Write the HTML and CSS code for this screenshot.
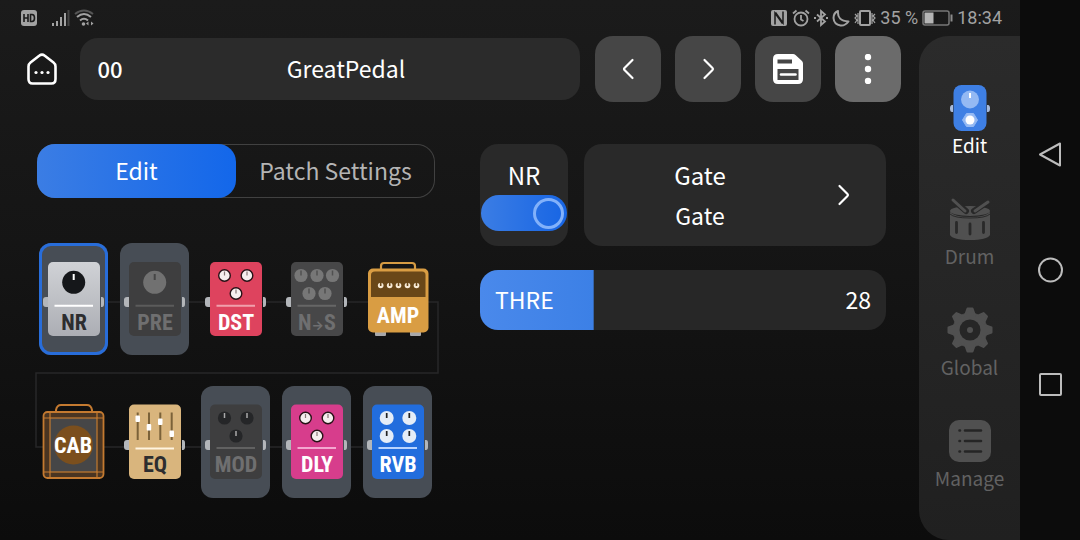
FILE: index.html
```html
<!DOCTYPE html>
<html lang="en">
<head>
<meta charset="utf-8">
<title>GreatPedal</title>
<link rel="stylesheet" href="styles.css">
</head>
<body class="device">
<div class="screen">
  <header class="status">
    <div class="status-group status-left">
      <svg width="18" height="18" viewBox="0 0 18 18"><rect x="1" y="1" width="16" height="16" rx="3" fill="#a2a2a2"/><path d="M4 5v8M8 5v8M4 9h4M10.500 5.500v7h1.500q2.500 0 2.500-3.500t-2.500-3.500z" fill="none" stroke="#1b1b1b" stroke-width="1.600"/></svg>
      <svg width="20" height="18" viewBox="0 0 20 18"><g stroke-width="2" fill="none" stroke="#a2a2a2"><path d="M3 14v3M7 12v5M11 8v9M15 4v13"/><path d="M18.500 1v16" stroke="#444"/></g></svg>
      <svg width="20" height="18" viewBox="0 0 20 18"><g fill="none" stroke-width="2" stroke="#a2a2a2"><path d="M1 5q9-7 18 0" stroke="#555"/><path d="M3 8q7-6 14 0"/><path d="M6 11.500q4-3.500 8 0"/></g><circle cx="9.500" cy="15" r="1.800" fill="#a2a2a2"/><path d="M12 14.500l2.500-2v4zM19.500 14.500l-2.500-2v4z" fill="#a2a2a2"/></svg>
    </div>
    <div class="status-group status-right">
      <svg width="18" height="18" viewBox="0 0 18 18"><path d="M3 1h12q2 0 2 2v12q0 2-2 2H3q-2 0-2-2V3q0-2 2-2z" fill="#a2a2a2"/><path d="M5 15.500V4l7.500 10.500M13 2.500V14L5.500 3.500" stroke="#1b1b1b" stroke-width="1.500" fill="none"/></svg>
      <svg width="18" height="18" viewBox="0 0 18 18" fill="none" stroke="#a2a2a2" stroke-width="1.800"><circle cx="9" cy="10" r="6.500"/><path d="M9 6v4.500l2.500 1.500M1 4.500l3.500-3M17 4.500l-3.500-3"/></svg>
      <svg width="14" height="18" viewBox="0 0 14 18" fill="none" stroke="#a2a2a2" stroke-width="1.800"><path d="M3 5.500l8 7-4 3.500V2l4 3.500-8 7"/><path d="M0 9h2M12 9h2"/></svg>
      <svg width="18" height="18" viewBox="0 0 18 18" fill="none" stroke="#a2a2a2" stroke-width="2" stroke-linejoin="round"><path d="M6 2Q5 12 16.500 12.500 13 17 8.500 16.500 2 15.500 1.500 9 1.500 4 6 2z"/></svg>
      <svg width="22" height="18" viewBox="0 0 22 18" fill="none" stroke="#a2a2a2"><rect x="6" y="2" width="10" height="14" rx="1" stroke-width="2"/><path d="M1 5l2 2-2 2 2 2-2 3M4 4v11M18 4v11M21 5l-2 2 2 2-2 2 2 3" stroke-width="1.200"/></svg>
      <span class="status-text">35 %</span>
      <svg width="31" height="18" viewBox="0 0 31 18"><rect x="1" y="2" width="26" height="14" rx="2" fill="none" stroke="#777" stroke-width="1.500"/><rect x="2.500" y="3.500" width="9" height="11" fill="#b5b5b5"/><path d="M29.500 5.500v7" stroke="#8a8a8a" stroke-width="2"/></svg>
      <time class="status-text">18:34</time>
    </div>
  </header>

  <main class="editor">
    <div class="topbar">
      <button class="home" aria-label="Home">
        <svg width="30" height="32" viewBox="0 0 30 32"><path d="M12.500 2.600Q15 .5 17.500 2.600L26.500 9.500Q28.500 11 28.500 13.500V26Q28.500 30.500 24.500 30.500H5.500Q1.500 30.500 1.500 26V13.500Q1.500 11 3.500 9.500z" fill="none" stroke="#fff" stroke-width="2.600"/><g fill="#fff"><circle cx="9" cy="19.500" r="1.600"/><circle cx="15" cy="19.500" r="1.600"/><circle cx="21" cy="19.500" r="1.600"/></g></svg>
      </button>
      <button class="patch"><span class="patch-number">00</span><span class="patch-name">GreatPedal</span></button>
      <div class="tools">
        <button class="tool" aria-label="Previous patch"><svg width="30" height="30" viewBox="0 0 30 30"><path d="M19.500 6l-8 8q-1 1 0 2l8 8" fill="none" stroke="#fff" stroke-width="2.200" stroke-linecap="round"/></svg></button>
        <button class="tool" aria-label="Next patch"><svg width="30" height="30" viewBox="0 0 30 30"><path d="M11.500 6l8 8q1 1 0 2l-8 8" fill="none" stroke="#fff" stroke-width="2.200" stroke-linecap="round"/></svg></button>
        <button class="tool" aria-label="Save"><svg width="30" height="30" viewBox="0 0 30 30"><path d="M5 0h15q1.500 0 2.500 1l6.500 6q1 1 1 2.500V25q0 5-5 5H5q-5 0-5-5V5q0-5 5-5z" fill="#fff"/><path d="M4.500 5.500h14.500v4H4.500zM4.500 15h21v11h-21z" fill="#464646"/><path d="M8 20.500h14.500" stroke="#fff" stroke-width="2.600" stroke-linecap="round"/></svg></button>
        <button class="tool tool-active" aria-label="More"><svg width="30" height="30" viewBox="0 0 30 30" fill="#fff"><circle cx="15" cy="3" r="3.200"/><circle cx="15" cy="15" r="3.200"/><circle cx="15" cy="27" r="3.200"/></svg></button>
      </div>
    </div>

    <div class="columns">
      <section class="left">
        <div class="tabs" role="tablist">
          <button class="tab tab-on" role="tab" aria-selected="true">Edit</button>
          <button class="tab" role="tab" aria-selected="false">Patch Settings</button>
        </div>

        <div class="chain">
          <svg class="wire" viewBox="0 0 398 255" preserveAspectRatio="none"><path d="M37 59H401V130H-1V204H390" fill="none" stroke="#272728" stroke-width="1.500"/></svg>
          <div class="effects">
            <button class="effect lit selected"><svg class="pedal" viewBox="0 0 69 112">
              <defs>
                <linearGradient id="silver" x2="0" y2="1"><stop stop-color="#d0d2d6"/><stop offset="1" stop-color="#acaeb4"/></linearGradient>
                <g id="jacks" fill="#b3b6ba"><path d="M9 54H7q-3 0-3 3v4q0 3 3 3h2zM62 54h1q2 0 2 3v4q0 3-2 3h-1z"/></g>
                <g id="dial"><circle r="5.800" fill="#f6eeee" stroke="#271116" stroke-width="1.400"/><path d="M0-4v4" stroke="#877" stroke-width="1.200"/></g>
                <g id="dial-off"><circle r="6.600" fill="#777"/><path d="M0-5v5" stroke="#505050" stroke-width="1.500"/></g>
                <g id="dial-dark"><circle r="6.600" fill="#252628"/><path d="M0-5v5" stroke="#aaa" stroke-width="1.500"/></g>
                <g id="dial-white"><circle r="7" fill="#e5edf7"/><path d="M0-5v5" stroke="#222" stroke-width="1.700"/></g>
              </defs>
              <use href="#jacks"/><rect x="9" y="19" width="52" height="74" rx="5" fill="url(#silver)"/><circle cx="34.700" cy="39.300" r="11.500" fill="#15171a"/><path d="M34.700 31v6" stroke="#fff" stroke-width="2"/><path d="M15.500 62.700h38.500" stroke="#fff" stroke-width="2"/><text class="name name-dark" x="35" y="87">NR</text></svg></button>
            <button class="effect lit"><svg class="pedal" viewBox="0 0 69 112"><use href="#jacks"/><rect x="9" y="19" width="52" height="74" rx="5" fill="#3e3e3f"/><circle cx="34.700" cy="39.300" r="11.500" fill="#717171"/><path d="M34.700 31v6" stroke="#464646" stroke-width="2"/><path d="M15.500 62.700h38.500" stroke="#5b5b5b" stroke-width="2"/><text class="name name-off" x="35" y="87">PRE</text></svg></button>
            <button class="effect"><svg class="pedal" viewBox="0 0 69 112"><use href="#jacks"/><rect x="9" y="19" width="52" height="74" rx="5" fill="#de435e"/><use href="#dial" x="23.500" y="32.500"/><use href="#dial" x="46" y="32.500"/><use href="#dial" x="35" y="50.500"/><path d="M15.500 62.700h38.500" stroke="#f0a0ad" stroke-width="2"/><text class="name" x="35" y="87">DST</text></svg></button>
            <button class="effect"><svg class="pedal" viewBox="0 0 69 112"><use href="#jacks"/><rect x="9" y="19" width="52" height="74" rx="5" fill="#474748"/><use href="#dial-off" x="19" y="32.500"/><use href="#dial-off" x="35" y="32.500"/><use href="#dial-off" x="50.500" y="32.500"/><use href="#dial-off" x="27" y="50.500"/><use href="#dial-off" x="43" y="50.500"/><path d="M15.500 62.700h38.500" stroke="#666" stroke-width="2"/><text class="name name-off" x="35" y="87">N<tspan class="arrow">→</tspan>S</text></svg></button>
            <button class="effect"><svg class="pedal" viewBox="0 0 69 112"><path d="M18 27v-4q0-3 3-3h28q3 0 3 3v4" fill="none" stroke="#d69b43" stroke-width="2.200"/><path d="M12 88h11v4q0 1-1 1h-9q-1 0-1-1zM47 88h11v4q0 1-1 1h-9q-1 0-1-1z" fill="#a8a8aa"/><rect x="5" y="25.500" width="60.500" height="64" rx="5" fill="#d99d43"/><path d="M12 28.500h47q3.500 0 3.500 3.500v22H8V32q0-3.500 4-3.500z" fill="#694718"/><g fill="#f7ead6"><circle cx="17.700" cy="42.500" r="2.800"/><circle cx="26.700" cy="42.500" r="2.800"/><circle cx="35.500" cy="42.500" r="2.800"/><circle cx="44.500" cy="42.500" r="2.800"/><circle cx="53.500" cy="42.500" r="2.800"/></g><path d="M17.700 39v4M26.700 39v4M35.500 39v4M44.500 39v4M53.500 39v4" stroke="#694718" stroke-width="1.600"/><text class="name" x="35" y="80">AMP</text></svg></button>

            <button class="effect"><svg class="pedal" viewBox="0 0 69 112"><g fill="none" stroke="#c47a30"><path d="M17 26v-2q1-5 5-5h26q4 0 5 5v2" stroke-width="2"/><rect x="4.500" y="26" width="60" height="66" rx="4" fill="#4a3522" stroke-width="1.800"/><rect x="11" y="32" width="47" height="54" fill="#464647" stroke-width="1.200"/><path d="M4.500 32h6.500v-6M64.500 32h-6.500v-6M4.500 86h6.500v6M64.500 86h-6.500v6" stroke-width="1.200"/></g><circle cx="34.500" cy="59" r="19.500" fill="#7b4f1d"/><text class="name" x="34" y="67">CAB</text></svg></button>
            <button class="effect"><svg class="pedal" viewBox="0 0 69 112"><use href="#jacks"/><rect x="9" y="18.500" width="52" height="74.500" rx="5" fill="#d9b57d"/><path d="M17.700 26.500v27.500M29 26.500v27.500M40.300 26.500v27.500M51.700 26.500v27.500" stroke="#7b6239" stroke-width="2"/><g fill="#fff"><rect x="15.500" y="29.500" width="4.500" height="6.500" rx="1"/><rect x="26.700" y="38" width="4.500" height="6.500" rx="1"/><rect x="38" y="32.500" width="4.500" height="6.500" rx="1"/><rect x="49.500" y="44.500" width="4.500" height="6.500" rx="1"/></g><path d="M15.500 62.500h38.500" stroke="#fff4df" stroke-width="2"/><text class="name name-dark" x="35" y="86">EQ</text></svg></button>
            <button class="effect lit"><svg class="pedal" viewBox="0 0 69 112"><use href="#jacks"/><rect x="9" y="18.500" width="52" height="74.500" rx="5" fill="#3e3e3f"/><use href="#dial-dark" x="23.500" y="32"/><use href="#dial-dark" x="46" y="32"/><use href="#dial-dark" x="35" y="50"/><path d="M15.500 62h38.500" stroke="#616161" stroke-width="2"/><text class="name name-off" x="35" y="86">MOD</text></svg></button>
            <button class="effect lit"><svg class="pedal" viewBox="0 0 69 112"><use href="#jacks"/><rect x="9" y="18.500" width="52" height="74.500" rx="5" fill="#d73d8c"/><use href="#dial" x="23.500" y="32"/><use href="#dial" x="46" y="32"/><use href="#dial" x="35" y="50"/><path d="M15.500 62h38.500" stroke="#f4a6d0" stroke-width="2"/><text class="name" x="35" y="86">DLY</text></svg></button>
            <button class="effect lit"><svg class="pedal" viewBox="0 0 69 112"><use href="#jacks"/><rect x="9" y="18.500" width="52" height="74.500" rx="5" fill="#226ddd"/><use href="#dial-white" x="23.700" y="32"/><use href="#dial-white" x="46.300" y="32"/><use href="#dial-white" x="23.700" y="50"/><use href="#dial-white" x="46.300" y="50"/><path d="M15.500 62h38.500" stroke="#b9d4ff" stroke-width="2"/><text class="name" x="35" y="86">RVB</text></svg></button>
          </div>
        </div>
      </section>

      <section class="right">
        <div class="module">
          <div class="card power">
            <label class="power-label" for="power">NR</label>
            <input class="switch" id="power" type="checkbox" role="switch" checked>
          </div>
          <button class="card model">
            <span class="model-names"><span class="model-type">Gate</span><span class="model-name">Gate</span></span>
            <svg width="30" height="30" viewBox="0 0 30 30"><path d="M11.500 6l8 8q1 1 0 2l-8 8" fill="none" stroke="#fff" stroke-width="2.200" stroke-linecap="round"/></svg>
          </button>
        </div>
        <div class="param">
          <input class="param-range" id="thre" type="range" min="0" max="100" value="28" style="--level: 28%">
          <label class="param-label" for="thre">THRE</label>
          <output class="param-value" for="thre">28</output>
        </div>
      </section>
    </div>
  </main>

  <nav class="sidebar">
    <a class="side-link side-on" href="#edit"><svg width="46" height="46" viewBox="0 0 46 46"><path d="M6 20H5q-2 0-2 3.500T5 27h1zM40 20h1q2 0 2 3.500T41 27h-1z" fill="#a8bbdc"/><rect x="6.500" y="0" width="33" height="46" rx="8" fill="#3e7fe4"/><circle cx="23" cy="14.500" r="9" fill="#94b9f3"/><path d="M23 8v5" stroke="#fff" stroke-width="2"/><path d="M19.500 28.500h7l4 6.500-4 6.500h-7l-4-6.500z" fill="#94b9f3" stroke="#94b9f3" stroke-linejoin="round"/><circle cx="23" cy="35" r="4.500" fill="#fff"/></svg>Edit</a>
    <a class="side-link" href="#drum"><svg width="46" height="46" viewBox="0 0 46 46"><path d="M3 16v23q3 5 20 5t20-5V16q-4 5-20 5T3 16z" fill="#505050"/><ellipse cx="23" cy="15" rx="20" ry="5" fill="#505050"/><path d="M5 3l14 12M42 5L27 15" stroke="#282828" stroke-width="6" stroke-linecap="round"/><path d="M6 4l12 11M41 6L28 15" stroke="#505050" stroke-width="3" stroke-linecap="round"/><path d="M3 18q4 4 20 4t20-4" stroke="#292929" fill="none"/><path d="M9.500 26.500v10M23 28v10M36.500 26.500v10" stroke="#292929" stroke-width="2.800" stroke-linecap="round"/></svg>Drum</a>
    <a class="side-link" href="#global"><svg width="46" height="46" viewBox="0 0 46 46"><g fill="#505050" stroke="#505050" stroke-linejoin="round"><circle cx="23" cy="23" r="17"/><g id="teeth"><path d="M20.500 1.500h5l2.500 7h-10zM20.500 44.500h5l2.500-7h-10zM1.500 20.500v5l7 2.500v-10zM44.500 20.500v5l-7 2.500v-10z" stroke-width="2"/></g><use href="#teeth" transform="rotate(45 23 23)"/></g><circle cx="23" cy="23" r="10.500" fill="#262626"/><circle cx="23" cy="23" r="3" fill="#505050"/></svg>Global</a>
    <a class="side-link" href="#manage"><svg width="46" height="46" viewBox="0 0 46 46"><rect x="2" y="2" width="42" height="42" rx="10" fill="#505050"/><g stroke="#252525" stroke-width="2.600" stroke-linecap="round"><path d="M18 12.500h16M18 23h16M18 33.500h16M12.500 12.500h.5M12.500 23h.5M12.500 33.500h.5"/></g></svg>Manage</a>
  </nav>
</div>

<aside class="system-nav">
  <button aria-label="Back"><svg width="28" height="28" viewBox="0 0 28 28"><path d="M4 13.500L24 2.500v22z" fill="none" stroke="#bdbdbd" stroke-width="2" stroke-linejoin="round"/></svg></button>
  <button aria-label="Home screen"><svg width="28" height="28" viewBox="0 0 28 28"><circle cx="14.500" cy="14" r="11.500" fill="none" stroke="#bdbdbd" stroke-width="2"/></svg></button>
  <button aria-label="Recent apps"><svg width="28" height="28" viewBox="0 0 28 28"><rect x="4" y="3" width="21" height="21" rx="1" fill="none" stroke="#bdbdbd" stroke-width="2"/></svg></button>
</aside>
</body>
</html>
```

FILE: styles.css
```css
*,
*::before {
  box-sizing: border-box;
}

button {
  margin: 0;
  padding: 0;
  border: 0;
  background: none;
  color: inherit;
  font: inherit;
}

svg {
  display: block;
  flex: none;
}

.device {
  display: flex;
  min-height: 100vh;
  margin: 0;
  background: #0c0c0c;
  color: #fff;
  font-family: "Noto Sans CJK SC", "Open Sans", sans-serif;
  font-size: 23px;
}

.screen {
  flex: 1;
  display: grid;
  grid-template-columns: 1fr 101px;
  grid-template-rows: 36px 1fr;
  background: linear-gradient(#1b1b1b, #151515 45%, #0c0c0c);
}

.status {
  grid-column: 1 / -1;
  display: flex;
  justify-content: space-between;
  padding: 0 18px 0 20px;
  color: #a2a2a2;
  font: 18px/36px Roboto, sans-serif;
}

.status-group {
  display: flex;
  align-items: center;
}

.status-left {
  gap: 4px;
}

.status-left svg:first-child {
  margin-right: 8px;
}

.status-right {
  gap: 4px;
}

.topbar {
  display: flex;
  align-items: center;
  padding: 0 18px 0 27px;
}

.home {
  margin-right: 23px;
}

.patch {
  flex: 1;
  display: grid;
  grid-template-columns: 60px 1fr 28px;
  align-items: center;
  height: 62px;
  margin-right: 15px;
  padding-bottom: 2px;
  border-radius: 18px;
  background: #2b2b2b;
  line-height: 32px;
}

.patch-number {
  font-size: 22px;
  font-weight: 500;
}

.tools {
  display: flex;
  gap: 14px;
}

.tool {
  display: grid;
  place-items: center;
  width: 66px;
  height: 66px;
  border-radius: 18px;
  background: #464646;
}

.tool-active {
  background: #6b6b6b;
}

.columns {
  display: grid;
  grid-template-columns: 398fr 406fr;
  gap: 45px;
  padding: 42px 33px 42px 37px;
}

.tabs {
  display: grid;
  grid-template-columns: 1fr 1fr;
  height: 54px;
  border-radius: 18px;
  box-shadow: inset 0 0 0 1px #414141;
}

.tab {
  padding-bottom: 3px;
  border-radius: 18px;
  color: #b4b4b4;
}

.tab-on {
  background: linear-gradient(90deg, #3b7de4, #1367ea);
  color: #fff;
}

.chain {
  display: grid;
  margin-top: 45px;
}

.wire,
.effects {
  grid-area: 1 / 1;
}

.wire {
  width: 100%;
  height: 100%;
  overflow: visible;
}

.effects {
  display: grid;
  grid-template-columns: repeat(5, 1fr);
  gap: 31px 12px;
  padding: 0 3px 0 2px;
  z-index: 1;
}

.effect {
  border-radius: 12px;
}

.lit {
  background: #474d55;
}

.selected {
  box-shadow: inset 0 0 0 3px #286dda;
}

.pedal {
  width: 100%;
}

.name {
  fill: #fff;
  font-family: "Liberation Sans Narrow", "Roboto Condensed", "Open Sans", sans-serif;
  font-size: 22px;
  font-weight: 700;
  text-anchor: middle;
}

.name-dark {
  fill: #2d2d2f;
}

.name-off {
  fill: #6f6f70;
}

.arrow {
  font-family: Inter, sans-serif;
  font-size: 13px;
}

.module {
  display: grid;
  grid-template-columns: 88px 1fr;
  gap: 16px;
  height: 102px;
}

.card {
  border-radius: 18px;
  background: #292929;
}

.power {
  display: flex;
  flex-direction: column;
  padding: 13px 1px 0;
  text-align: center;
}

.power-label {
  padding-bottom: 2px;
  line-height: 36px;
}

.switch {
  appearance: none;
  display: flex;
  align-items: center;
  height: 36px;
  margin: 0;
  padding: 0 3px;
  border-radius: 18px;
  background: linear-gradient(90deg, #3b7de4, #1765e4);
}

.switch::before {
  content: "";
  width: 31px;
  height: 31px;
  border: 3px solid #82b1fa;
  border-radius: 50%;
}

.switch:checked {
  justify-content: flex-end;
}

.model {
  display: grid;
  grid-template-columns: 1fr 30px;
  gap: 12px;
  align-items: center;
  padding: 0 28px 0 0;
}

.model-names {
  display: grid;
  line-height: 40px;
}

.power-label,
.model-type {
  font-size: 24px;
}

.param {
  display: grid;
  grid-template-columns: 1fr auto;
  align-items: center;
  height: 60px;
  margin-top: 24px;
  line-height: 36px;
}

.param-range {
  grid-area: 1 / 1 / 2 / 3;
  appearance: none;
  width: 100%;
  height: 60px;
  margin: 0;
  border-radius: 18px;
  background: linear-gradient(90deg, #4a89eb, #3c80e6) 0 0 / var(--level) 100% no-repeat #272727;
}

.param-range::-webkit-slider-thumb {
  appearance: none;
  width: 1px;
  height: 60px;
}

.param-label,
.param-value {
  grid-row: 1;
  z-index: 1;
  padding: 0 15px 2px;
  pointer-events: none;
}

.param-label {
  grid-column: 1;
}

.param-value {
  grid-column: 2;
}

.sidebar {
  display: flex;
  flex-direction: column;
  gap: 37px;
  padding-top: 49px;
  border-radius: 30px 0 0 30px;
  background: linear-gradient(#2b2b2b, #202020);
}

.side-link {
  display: flex;
  flex-direction: column;
  align-items: center;
  color: #626262;
  font-size: 19px;
  line-height: 28px;
  text-decoration: none;
}

.side-on {
  color: #fff;
}

.system-nav {
  display: flex;
  flex-direction: column;
  align-items: center;
  justify-content: center;
  gap: 87px;
  width: 60px;
}
```
